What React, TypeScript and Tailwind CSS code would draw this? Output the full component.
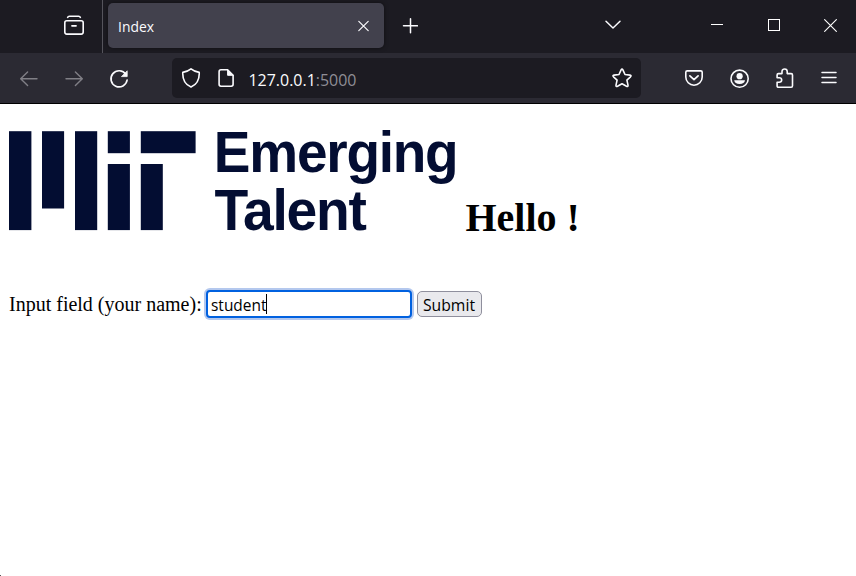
import React from "react";

const ui = "font-['Open_Sans','Noto_Sans',sans-serif]";

type IconProps = { d?: string; w?: number; className?: string; children?: React.ReactNode; sw?: number };

function Icon({ d, w = 20, className = "", children, sw = 1.5 }: IconProps) {
  return (
    <svg
      width={w}
      height={w}
      viewBox={`0 0 ${w} ${w}`}
      fill="none"
      stroke="currentColor"
      strokeWidth={sw}
      strokeLinecap="round"
      strokeLinejoin="round"
      className={`shrink-0 ${className}`}
    >
      {d && <path d={d} />}
      {children}
    </svg>
  );
}

function TabBar() {
  return (
    <div className="flex h-[53px] items-start bg-[#1c1b22] text-[#fbfbfe]">
      <div className="flex h-[53px] w-[103px] border-r border-[#55545c] pt-[15px] pl-16">
        <Icon>
          <path d="M3.6 2.4Q4 1.2 5.4 1.2H14.6Q16 1.2 16.4 2.4" />
          <rect x="0.8" y="5.7" width="18.4" height="13.4" rx="2" strokeWidth="1.6" />
          <path d="M8 10.8h4" strokeWidth="1.8" />
        </Icon>
      </div>
      <div className="mt-[3px] ml-[5px] flex h-[45px] w-[276px] items-center rounded-[5px] bg-[#42414d] pr-[13px] pl-[10px] shadow-[0_0_4px_rgba(0,0,0,0.5)]">
        <svg width="60" height="24" className="block">
          <text x="0" y="18" fontSize="14" textLength="36" lengthAdjust="spacingAndGlyphs" fill="#fbfbfe" className={ui}>Index</text>
        </svg>
        <Icon w={14} sw={1.2} d="M1.8 2.3l9.4 9.4M11.2 2.3l-9.4 9.4" className="ml-auto" />
      </div>
      <Icon w={16} sw={1.5} d="M8.5 .8v14M1.5 7.8h14" className="mt-[18px] ml-[18px]" />
      <Icon w={18} d="M2 6.3L9 13L16 6.3" className="mt-[15px] ml-[186px]" />
      <svg width="12" height="12" className="mt-[19px] ml-[89px]"><path d="M0 5.5h12" stroke="white" /></svg>
      <svg width="12" height="12" className="mt-[19px] ml-[45px]"><rect x=".5" y=".5" width="11" height="11" fill="none" stroke="white" /></svg>
      <svg width="13" height="13" className="mt-[19px] ml-[44px]"><path d="M.3 .3l12.4 12.4M12.7 .3L.3 12.7" stroke="white" strokeWidth="1.1" /></svg>
    </div>
  );
}

function Toolbar() {
  return (
    <div className="flex h-[51px] items-start border-b border-black bg-[#2b2a33] pt-[5px] text-[#fbfbfe]">
      <Icon className="mt-[11px] ml-[19px] text-[#807f86]" sw={1.4} d="M18 9.8H2M8.6 3L1.7 9.8L8.6 16.6" />
      <Icon className="mt-[11px] ml-[25px] text-[#807f86]" sw={1.4} d="M2 9.8h16M11.4 3l6.9 6.8l-6.9 6.8" />
      <Icon className="mt-[11px] ml-[25px]" sw={1.7}>
        <path d="M16.8 5.3A8.1 8.1 0 1 0 18.1 11" />
        <path d="M18.2 2.2v5.4h-5.4z" fill="currentColor" strokeWidth="0.8" />
      </Icon>
      <div className="ml-[43px] flex h-10 w-[469px] items-start rounded-[5px] bg-[#1c1b22] pr-[9px] pl-[9px]">
        <Icon className="mt-[10px]" sw={1.6} d="M10 .9C12.5 3 15.5 3.9 18.2 4.4C18.6 11.5 15.4 16.8 10 19.1C4.6 16.8 1.4 11.5 1.8 4.4C4.5 3.9 7.5 3 10 .9Z" />
        <Icon className="mt-[10px] ml-[15px]" sw={1.6}>
          <path d="M5 1.8h6.6l5.5 5.5v9q0 1.9-1.9 1.9H5q-1.9 0-1.9-1.9V3.7q0-1.9 1.9-1.9Z" />
          <path d="M11.6 2v5.3h5.3z" fill="currentColor" strokeWidth="1" />
        </Icon>
        <svg width="125" height="30" className="mt-[5px] ml-[12px]">
          <text x="0.5" y="23" fontSize="16.5" textLength="108" lengthAdjust="spacingAndGlyphs" fill="#fbfbfe" className={ui}>
            127.0.0.1<tspan fill="#8f8e96">:5000</tspan>
          </text>
        </svg>
        <Icon className="mt-[10px] ml-auto" sw={1.6} d="M9.1 1.8Q10 .1 10.9 1.8L13 6.5L18 7.1Q19.8 7.5 18.5 8.8L14.9 12.2L16 17.2Q16.1 19.1 14.5 18.3L10 15.8L5.5 18.3Q3.9 19.1 4 17.2L5.1 12.2L1.5 8.8Q.2 7.5 2 7.1L7 6.5Z" />
      </div>
      <Icon className="mt-[10px] ml-[43px]" sw={1.6}>
        <path d="M3.2 2.9h13.6q1.4 0 1.4 1.4v4.7a8.2 8.2 0 0 1-16.4 0V4.3q0-1.4 1.4-1.4Z" />
        <path d="M5.9 7.8L10 11.7L14.1 7.8" strokeWidth="1.7" />
      </Icon>
      <Icon className="mt-[11px] ml-[26px]" sw={1.6}>
        <circle cx="9.6" cy="9.7" r="8.6" />
        <circle cx="9.6" cy="7.2" r="3.1" fill="currentColor" stroke="none" />
        <path d="M4.2 11.3h10.8q-.6 3.8-5.4 3.8t-5.4-3.8Z" fill="currentColor" stroke="none" />
      </Icon>
      <Icon className="mt-[10px] ml-[25px]" sw={1.6} d="M3.4 5.6H7V3.6C7 .2 12.2 .2 12.2 3.6v2h4q1.3 0 1.3 1.3V17.8q0 1.4-1.3 1.4H3.4Q2.1 19.2 2.1 17.8V14.2H4.2C7.5 14.2 7.5 9.7 4.2 9.7H2.1V6.9Q2.1 5.6 3.4 5.6Z" />
      <Icon w={18} className="mt-[11px] ml-[25px]" d="M2 3.5h14M2 8.5h14M2 13.5h14" />
    </div>
  );
}

function Logo() {
  return (
    <svg width="448" height="110" viewBox="0 0 448 110" className="block shrink-0 overflow-visible" fill="#030d32" role="img" aria-label="MIT Emerging Talent">
      <rect x="0" y="0.2" width="22.4" height="98.9" />
      <rect x="33" y="0.2" width="22.1" height="77.3" />
      <rect x="66" y="0.2" width="22.2" height="98.9" />
      <rect x="98.8" y="0.2" width="22.1" height="22" />
      <rect x="98.8" y="33" width="22.1" height="66.1" />
      <rect x="131.8" y="0.2" width="54.8" height="22" />
      <rect x="131.8" y="33" width="22" height="66.1" />
      <g className="font-['Liberation_Sans',Arial,sans-serif] font-bold" fontSize="58" letterSpacing="-1.3">
        <text transform="translate(204.8 41.4) scale(0.948 1)">Emerging</text>
        <text transform="translate(205.6 99) scale(0.952 1)">Talent</text>
      </g>
    </svg>
  );
}

export default function App() {
  return (
    <div className="flex h-[576px] w-[856px] flex-col overflow-hidden bg-white">
      <TabBar />
      <Toolbar />
      <main className="flex-1 pt-[27px] pl-[9px] font-['Liberation_Serif','Times_New_Roman',serif] text-black">
        <h1 className="flex h-[110px] items-start text-[40px] font-bold">
          <Logo />
          <span className="mt-[64px] ml-[8.5px] leading-[46px] whitespace-pre">Hello !</span>
        </h1>
        <form className="mt-[47px] flex h-[32px] items-center" onSubmit={(e) => e.preventDefault()}>
          <label className="w-[197px] text-[20px] leading-[23px] whitespace-nowrap">Input field (your name):</label>
          <div className="flex h-7 w-[206px] items-center rounded-[4px] border-2 border-[#0061e0] bg-white pl-[3px] ring-2 ring-[#b4c8ee]">
            <svg width="55" height="24" className="block overflow-visible">
              <text x="0" y="19" fontSize="17" textLength="55.5" lengthAdjust="spacingAndGlyphs" className={ui}>student</text>
            </svg>
            <span className="h-5 w-px bg-black" />
          </div>
          <button className="ml-[5px] flex h-[26px] w-[65px] items-center rounded-[5px] border border-[#8f8f9d] bg-[#e9e9ed] pl-[5px]">
            <svg width="53" height="24" className="block overflow-visible">
              <text x="0" y="19" fontSize="17" textLength="52" lengthAdjust="spacingAndGlyphs" className={ui}>Submit</text>
            </svg>
          </button>
        </form>
      </main>
      <div className="h-px w-px bg-[#555]" />
    </div>
  );
}
